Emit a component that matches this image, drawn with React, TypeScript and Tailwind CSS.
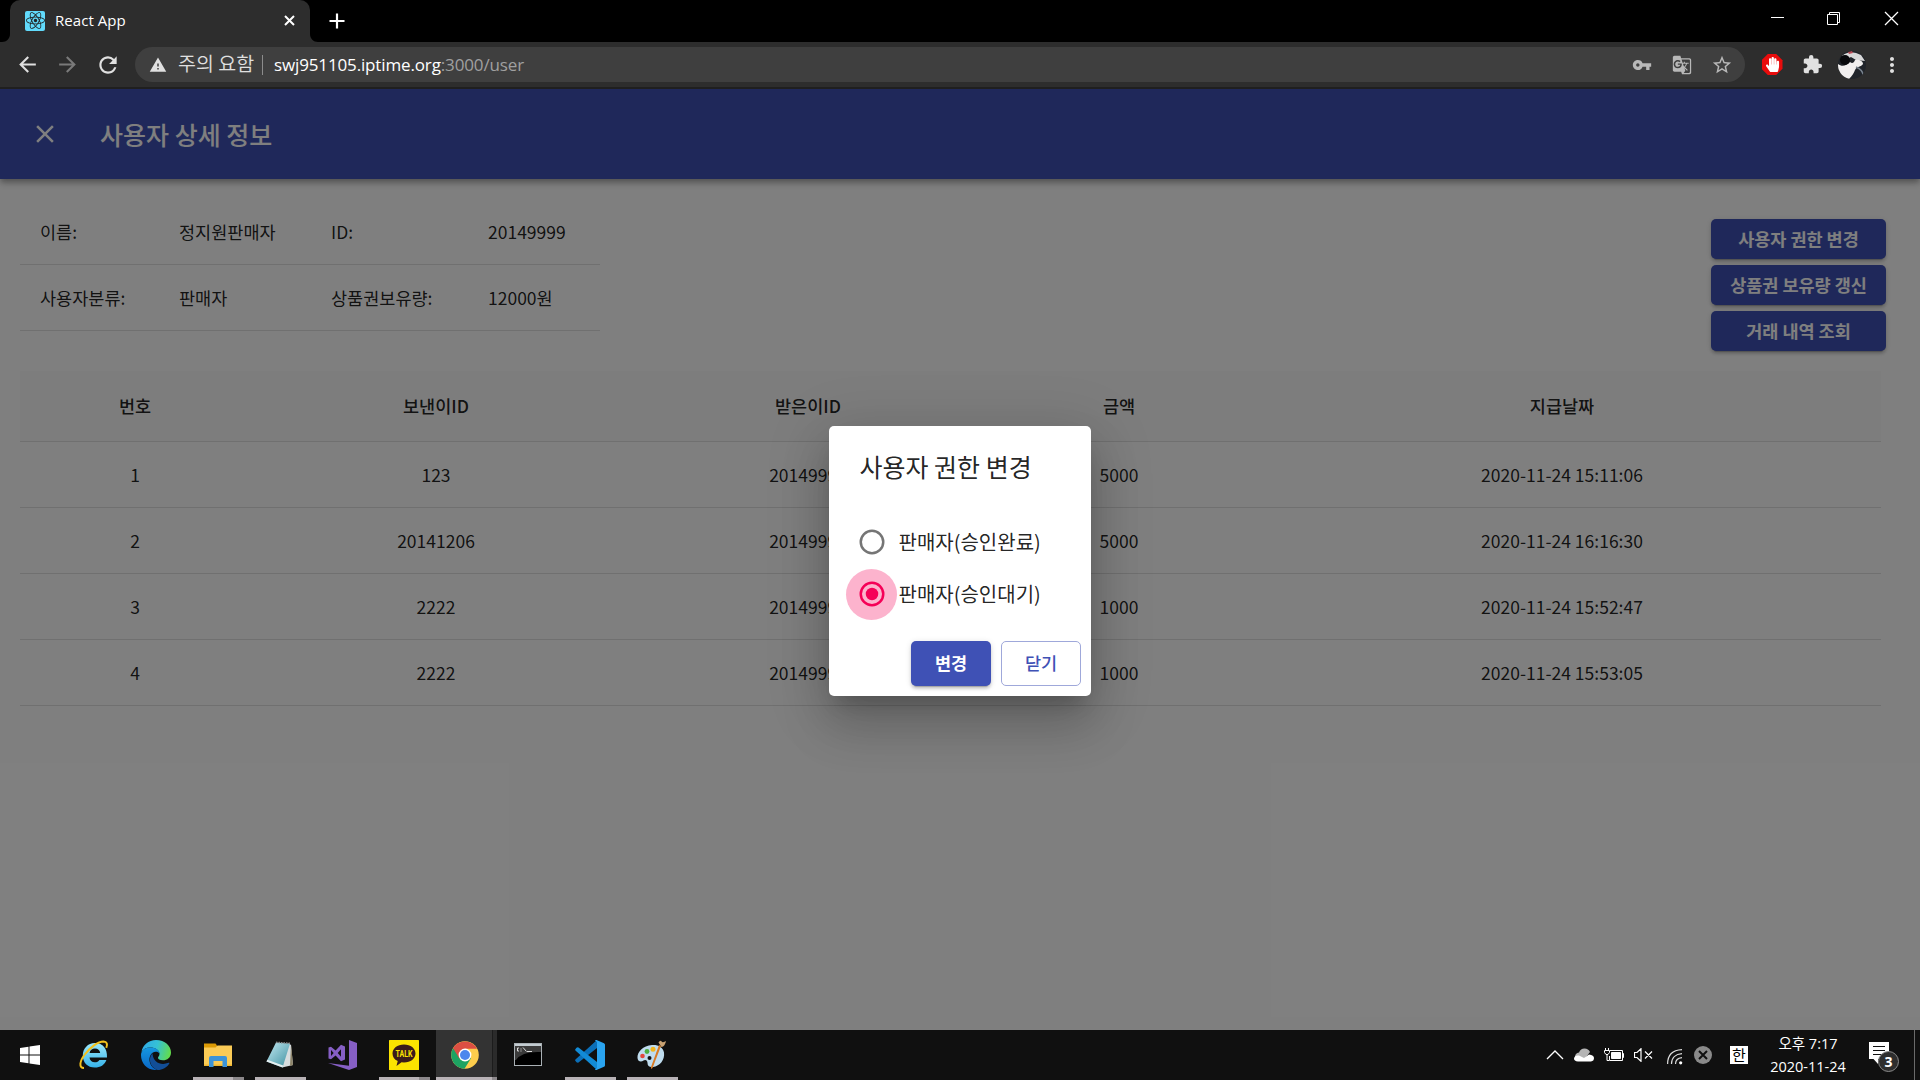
import React from 'react';
import {
  MdArrowBack, MdArrowForward, MdRefresh, MdWarning, MdVpnKey, MdGTranslate,
  MdStarBorder, MdExtension, MdMoreVert, MdClose,
} from 'react-icons/md';
import { FaReact, FaHandPaper } from 'react-icons/fa';

const rows = [
  ['1', '123', '20149999', '5000', '2020-11-24 15:11:06'],
  ['2', '20141206', '20149999', '5000', '2020-11-24 16:16:30'],
  ['3', '2222', '20149999', '1000', '2020-11-24 15:52:47'],
  ['4', '2222', '20149999', '1000', '2020-11-24 15:53:05'],
];

const raised =
  'shadow-[0_4px_1px_-3px_rgba(0,0,0,0.2),0_3px_3px_0_rgba(0,0,0,0.14),0_1px_6px_0_rgba(0,0,0,0.12)]';

function Cell({ children, w = 'w-10' }: { children?: React.ReactNode; w?: string }) {
  return <div className={`flex h-full shrink-0 items-center justify-center ${w}`}>{children}</div>;
}

function TabStrip() {
  return (
    <div className="flex h-[42px] bg-black">
      <svg className="ml-0.5 h-[42px] w-2 shrink-0" viewBox="0 0 8 42"><path d="M8 34v8H0c4.500 0 8-3.500 8-8z" fill="#2d2d2d" /></svg>
      <div className="flex w-[300px] items-center rounded-t-[10px] bg-[#2d2d2d] pb-[1px] pl-[15px]">
        <div className="flex size-5 items-center justify-center rounded-[2px] bg-[#61dafb] text-[#222]"><FaReact size={19} /></div>
        <span className="mb-0.5 ml-[10px] font-['Open_Sans'] text-[15px] leading-5 tracking-[0.05px] text-white">React App</span>
        <svg className="ml-auto mr-[15px] size-[11px]" viewBox="0 0 11 11"><path d="M1 1l9 9M10 1l-9 9" stroke="#fff" strokeWidth="2" /></svg>
      </div>
      <svg className="h-[42px] w-2 shrink-0" viewBox="0 0 8 42"><path d="M0 34v8h8c-4.500 0-8-3.500-8-8z" fill="#2d2d2d" /></svg>
      <svg className="ml-[11px] mt-[13px] size-4" viewBox="0 0 16 16"><path d="M8 .5v15M.5 8h15" stroke="#fff" strokeWidth="2.200" /></svg>
      <div className="ml-auto flex">
        <svg className="mt-[11px] h-[15px] w-[15px]" viewBox="0 0 15 15"><path d="M1 6.500h13" stroke="#fff" /></svg>
        <svg className="ml-[41px] mt-[11px] h-[15px] w-[15px]" viewBox="0 0 15 15" fill="none" stroke="#fff"><path d="M1.500 3.500h10v10h-10zM3.500 3V1.500h10v10H12" /></svg>
        <svg className="ml-[43px] mr-[21px] mt-[11px] h-[15px] w-[15px]" viewBox="0 0 15 15"><path d="M1 1l13 13M14 1L1 14" stroke="#fff" strokeWidth="1.300" /></svg>
      </div>
    </div>
  );
}

function Toolbar() {
  return (
    <div className="flex h-[47px] items-center border-b-2 border-[#1f1f1f] bg-[#2d2d2d] pl-[7px] text-[#e0e0e0]">
      <Cell><MdArrowBack size={25} /></Cell>
      <Cell><MdArrowForward size={25} className="text-[#7a7a7a]" /></Cell>
      <Cell><MdRefresh size={26} className="ml-px" /></Cell>
      <div className="ml-2 mr-[7px] flex h-[35px] w-[1610px] items-center rounded-full bg-[#3f3f3f] pl-[14px] pr-[3px]">
        <MdWarning size={18} />
        <span className="mb-[3px] ml-[11px] w-[79px] whitespace-nowrap font-['Noto_Sans_CJK_KR'] text-[19.500px] font-[350] leading-7">주의 요함</span>
        <span className="ml-[5px] h-5 w-px bg-[#8c8c8c]" />
        <span className="ml-[11px] font-['Open_Sans'] text-[17px] leading-6 tracking-[-0.14px] text-white">swj951105.iptime.org<span className="text-[#a0a0a0]">:3000/user</span></span>
        <div className="ml-auto flex items-center text-[#b8b8b8]">
          <Cell><MdVpnKey size={20} /></Cell>
          <Cell><MdGTranslate size={20} /></Cell>
          <Cell><MdStarBorder size={22} /></Cell>
        </div>
      </div>
      <Cell>
        <span className="grid size-[21px] place-items-center bg-[#e80c0c] text-white [clip-path:polygon(30%_0,70%_0,100%_30%,100%_70%,70%_100%,30%_100%,0_70%,0_30%)]"><FaHandPaper size={15} /></span>
      </Cell>
      <Cell><MdExtension size={21} /></Cell>
      <Cell>
        <svg className="size-7 rounded-full" viewBox="0 0 28 28">
          <rect width="28" height="28" fill="#20242a" />
          <path d="M4 5Q12-2 23 4L27 10 18 9 13 6 5 10z" fill="#d8d8d8" />
          <path d="M10 1l4-1 1 2-4 1z" fill="#b84a55" />
          <path d="M0 13c4 3 8 2 12-2 2 2 4 1 5-2 4-1 8 1 8 4-2 3-6 2-8 6-1 3-3 6-6 9H6L0 20z" fill="#f1efef" />
          <circle cx="7" cy="9" r="5" fill="#08090c" />
          <path d="M18 16q7 3 7 8" stroke="#77818c" strokeWidth="1.500" fill="none" />
        </svg>
      </Cell>
      <Cell><MdMoreVert size={24} /></Cell>
    </div>
  );
}

function InfoRow({ cells }: { cells: string[] }) {
  return (
    <div className="grid h-[66px] grid-cols-[139px_152px_157px_132px] items-center border-b border-[#e0e0e0] pt-0.5 text-[17.500px]">
      {cells.map((c) => <span key={c} className="whitespace-nowrap pl-5">{c}</span>)}
    </div>
  );
}

function ActionButton({ label }: { label: string }) {
  return (
    <button className={`h-10 w-[175px] whitespace-nowrap rounded-[5px] bg-[#3f51b5] text-[17.500px] font-bold text-white ${raised}`}>{label}</button>
  );
}

const gridCols = 'grid grid-cols-[230px_372px_372px_250px_636px] items-center border-b border-[#e0e0e0] text-center text-[17.500px]';

function Page() {
  return (
    <div className="relative h-[941px] overflow-hidden bg-white font-['Noto_Sans_CJK_KR',sans-serif] text-[rgba(0,0,0,0.87)]">
      <header className="relative flex h-[90px] items-center bg-[#3f51b5] pl-[30px] text-white shadow-[0_3px_5px_-1px_rgba(0,0,0,0.2),0_5px_6px_0_rgba(0,0,0,0.14),0_1px_12px_0_rgba(0,0,0,0.12)]">
        <MdClose size={30} />
        <h1 className="ml-[40px] text-[25px] font-medium leading-10">사용자 상세 정보</h1>
      </header>
      <div className="flex justify-between pl-5 pr-[34px] pt-5">
        <div className="w-[580px]">
          <InfoRow cells={['이름:', '정지원판매자', 'ID:', '20149999']} />
          <InfoRow cells={['사용자분류:', '판매자', '상품권보유량:', '12000원']} />
        </div>
        <div className="flex flex-col gap-1.5 pt-5">
          <ActionButton label="사용자 권한 변경" />
          <ActionButton label="상품권 보유량 갱신" />
          <ActionButton label="거래 내역 조회" />
        </div>
      </div>
      <div className="ml-5 mt-5 w-[1861px]">
        <div className={`h-[71px] bg-[#fafafa] font-medium ${gridCols}`}>
          {['번호', '보낸이ID', '받은이ID', '금액', '지급날짜'].map((h) => <span key={h}>{h}</span>)}
        </div>
        {rows.map((r) => (
          <div key={r[0]} className={`h-[66px] pt-0.5 ${gridCols}`}>
            {r.map((c, i) => <span key={i}>{c}</span>)}
          </div>
        ))}
      </div>
      <div className="absolute inset-0 flex items-center justify-center bg-black/50">
        <Dialog />
      </div>
    </div>
  );
}

function Radio({ checked, label }: { checked?: boolean; label: string }) {
  return (
    <label className="flex h-[52px] items-center text-[20px] leading-[30px]">
      <span className={`grid size-[51px] shrink-0 place-items-center rounded-full ${checked ? 'bg-[#fcb3cd] text-[#f50057]' : 'text-[#757575]'}`}>
        <svg className="size-[30px]" viewBox="0 0 24 24">
          <circle cx="12" cy="12" r="9" fill="none" stroke="currentColor" strokeWidth="2" />
          {checked && <circle cx="12" cy="12" r="5" fill="currentColor" />}
        </svg>
      </span>
      <span className="ml-[1.500px] whitespace-nowrap">{label}</span>
    </label>
  );
}

function Dialog() {
  return (
    <div className="mt-[3px] flex h-[270px] w-[262px] flex-col rounded-[5px] bg-white shadow-[0_14px_19px_-9px_rgba(0,0,0,0.2),0_30px_48px_4px_rgba(0,0,0,0.14),0_11px_58px_10px_rgba(0,0,0,0.12)]">
      <h2 className="pl-[30.500px] pt-[20px] text-[25px] font-normal leading-10">사용자 권한 변경</h2>
      <div className="mt-[30px] flex flex-col pl-[17px]">
        <Radio label="판매자(승인완료)" />
        <Radio label="판매자(승인대기)" checked />
      </div>
      <div className="mb-[10px] mr-[10px] mt-auto flex justify-end gap-[10px]">
        <button className={`h-[45px] w-20 rounded-[5px] bg-[#3f51b5] text-[17.500px] font-bold text-white ${raised}`}>변경</button>
        <button className="h-[45px] w-20 rounded-[5px] border border-[#9fa8da] text-[17.500px] font-medium text-[#3f51b5]">닫기</button>
      </div>
    </div>
  );
}

function TaskItem({ children, open, split, active }: { children: React.ReactNode; open?: boolean; split?: boolean; active?: boolean }) {
  return (
    <div className="flex w-[62px] shrink-0 justify-center">
      <div className={`flex h-[50px] flex-col ${active ? 'w-[61px] bg-[linear-gradient(90deg,#333_56px,#1c1c1c_56px,#1c1c1c_57px,#2b2b2b_57px)]' : 'w-[51px]'}`}>
        <div className="flex h-[47px] w-full items-center justify-center pt-[3px]">{children}</div>
        {open && (
          <div className="flex h-[3px] w-full bg-[#b8b2b6]">
            {split && <span className={`ml-auto bg-[#8c888b] ${active ? 'w-[5px]' : 'w-[11px]'}`} />}
          </div>
        )}
      </div>
    </div>
  );
}

function Taskbar() {
  return (
    <div className="flex h-[50px] items-center bg-[#101010] text-white">
      <div className="flex w-[63px] justify-center pr-[3px]">
        <svg className="size-5" viewBox="0 0 20 20"><path d="M0 3l8.500-1.200v7.700H0zM9.500 1.600L20 0v9.500H9.500zM0 10.500h8.500v7.700L0 17zM9.500 10.500H20V20L9.500 18.400z" fill="#fff" /></svg>
      </div>
      <TaskItem>
        <svg className="size-[30px]" viewBox="0 0 30 30">
          <defs><linearGradient id="ie" x1="0" y1="0" x2="0" y2="1"><stop offset="0" stopColor="#9de9fc" /><stop offset="1" stopColor="#35b2e8" /></linearGradient></defs>
          <path d="M28 17.500H10.500c.3 3 2.400 4.800 5.300 4.800 2.200 0 3.700-.8 4.600-2.300h7c-1.800 5-6 7.600-11.600 7.600C8.500 27.600 3.800 22.500 3.800 15.500S8.800 3 16 3c8 0 12.400 5.500 12 14.500zM21.200 13c-.4-2.800-2.300-4.400-5.200-4.400s-5 1.700-5.400 4.400z" fill="url(#ie)" />
          <path d="M5 28c-5.500 0-4.300-7 .8-13.500C11 7.500 19 1.500 24.500 1.500c3.500.1 4.300 3 2.800 6.300" fill="none" stroke="#f3c11d" strokeWidth="2" />
        </svg>
      </TaskItem>
      <TaskItem>
        <svg className="size-[30px]" viewBox="0 0 30 30">
          <defs>
            <linearGradient id="eg" x1="0" y1=".3" x2="1" y2=".5"><stop offset="0" stopColor="#2fa9e8" /><stop offset=".5" stopColor="#35c1d5" /><stop offset="1" stopColor="#62dc4c" /></linearGradient>
            <linearGradient id="eb" x1="0" y1="0" x2="0" y2="1"><stop offset="0" stopColor="#1597e0" /><stop offset="1" stopColor="#0a66c5" /></linearGradient>
          </defs>
          <path d="M.5 12C1.500 5 7.500 0 15 0c9 0 15 6 15 12.500 0 5-3.800 7.800-8 7.800-3.500 0-5-1.300-5-2.500 0-1 1.500-1.500 1.500-4C18.500 10 14 7.500 9.500 7.500 5 7.500 2 9.500.5 12z" fill="url(#eg)" />
          <path d="M0 15C0 10.500 4 7.500 9.500 7.500c5 0 9 2.700 9 6-1-1.500-2.500-2-4-1.800-4 .4-6.500 4.500-6 9 .5 4.300 3.500 8 8 9.200C7 31 0 24 0 15z" fill="url(#eb)" />
          <path d="M11.500 13.300C7.500 17 7.500 27 16.500 30c5 0 9.500-2.600 11.800-6.500.4-.8-.2-1-.8-.7-7 3-15.500.2-16-9.500z" fill="#124e97" />
        </svg>
      </TaskItem>
      <TaskItem open split>
        <svg className="size-[28px]" viewBox="0 0 28 28">
          <path d="M0 2.500h11.500l1.500 2v5H0z" fill="#dc9a05" />
          <path d="M0 6.500h11.500L13.500 4.500H28v20.500H0z" fill="#fbcb56" /><path d="M0 23.500h28V25H0z" fill="#f0b62e" />
          <path d="M5 26v-9q0-2 2-2h14q2 0 2 2v9h-4.500v-6h-9v6z" fill="#3c93d8" />
        </svg>
      </TaskItem>
      <TaskItem open>
        <svg className="size-[30px]" viewBox="0 0 30 30">
          <defs><linearGradient id="np" x1="0" y1="0" x2="1" y2="1"><stop offset="0" stopColor="#c3eaf2" /><stop offset="1" stopColor="#3d8fa0" /></linearGradient></defs>
          <path d="M23 3l3 2 2 20-11 2.500z" fill="#d7dddf" /><path d="M26 4.500L28 25l-3 1z" fill="#8c8368" />
          <path d="M11 2.500L25 3.500 17.500 27.500 1.500 21.500z" fill="url(#np)" /><path d="M1.500 21.500l16 6 .7-2L2.300 19.800z" fill="#e6eff1" />
          <path d="M11 2.300l14 1" stroke="#888" strokeWidth="1.500" strokeDasharray="1.500 1" />
        </svg>
      </TaskItem>
      <TaskItem>
        <svg className="size-[30px]" viewBox="0 0 30 30" fill="#865fc5">
          <path d="M22 0l8 3v24l-8 3L1 23l21 2.800z" />
          <path fillRule="evenodd" d="M1.500 7.500L4 6.800l4.600 3.600L14 4.800l4 1.700v13L14 21.300l-5.400-5.700L4 19.200l-2.500-.8zM4 10v6l2.700-3zM14 9.300L10.700 13 14 16.700z" />
        </svg>
      </TaskItem>
      <TaskItem open split>
        <svg className="size-[30px]" viewBox="0 0 30 30">
          <rect width="30" height="30" rx="0.500" fill="#fbe300" />
          <path d="M15 4.500c6.700 0 11.500 3.900 11.500 9s-4.800 9-11.500 9l-2.500-.2L7.500 26l1.200-5C5.300 19.500 3.500 16.700 3.500 13.500c0-5.100 4.800-9 11.500-9z" fill="#391b1b" />
          <text x="15" y="16.600" textAnchor="middle" textLength="17" lengthAdjust="spacingAndGlyphs" fontFamily="Roboto" fontWeight="700" fontSize="8.500" fill="#fbe300">TALK</text>
        </svg>
      </TaskItem>
      <TaskItem open split active>
        <svg className="mr-[2px] size-[28px]" viewBox="0 0 28 28">
          <circle cx="14" cy="14" r="13.800" fill="#fdcd4c" />
          <path d="M14 14L2 7.200A13.800 13.800 0 0 0 13.500 27.800L20 17.300z" fill="#1da362" />
          <path d="M14 14L8.300 17.500 2 7.100A13.800 13.800 0 0 1 26 7.700H14z" fill="#dc4f43" />
          <circle cx="14" cy="14" r="6.400" fill="#fff" /><circle cx="14" cy="14" r="5" fill="#4b87ed" />
        </svg>
      </TaskItem>
      <TaskItem>
        <svg className="mb-px mr-px h-[23px] w-[28px]" viewBox="0 0 28 23">
          <rect x=".5" y=".5" width="27" height="22" fill="#000" stroke="#a9b0b4" /><rect x="1" y="1" width="26" height="2" fill="#c3ccd1" />
          <path d="M1 3h26v6Q8 8 2 17H1z" fill="#3b3b3b" />
          <path d="M5 5H3.500v3H5M7 5.500v1M7 7.500v1M9 4.500l3.500 4M13 8.500h5" stroke="#ddd" fill="none" />
        </svg>
      </TaskItem>
      <TaskItem open>
        <svg className="size-[30px]" viewBox="0 0 30 30">
          <path d="M22 0L22 8 3.500 22.500Q2.500 23 1.500 22.200L.5 21q-.8-1 .2-1.800z" fill="#0b6fb8" />
          <path d="M22 30L22 22 3.500 7.500Q2.500 7 1.500 7.800L.5 9q-.8 1 .2 1.800z" fill="#128bd6" />
          <path d="M21.500 0L29 3.300q1 .5 1 1.500v20.400q0 1-1 1.500L21.500 30q-1 .2-1.500-.6l2-1.400V2L20 .6Q20.500-.2 21.500 0z" fill="#2aa4f0" />
        </svg>
      </TaskItem>
      <TaskItem open>
        <svg className="size-[30px]" viewBox="0 0 30 30">
          <path d="M15 5C6 5.500 0 12 .5 18c.3 4 4 4 6 2.500s4 0 4 2.500c0 3 2 4.500 5.500 4C23 26 28 20 27 12.500 26 7 21 4.500 15 5z" fill="#bfdcee" />
          <circle cx="12.500" cy="18" r="2" fill="#111" />
          <circle cx="5.500" cy="16" r="2.300" fill="#e2483d" /><circle cx="10" cy="11.500" r="2.400" fill="#4caf3f" /><circle cx="16" cy="9.300" r="2.500" fill="#f2b61e" />
          <path d="M24 6l-8.500 22-1.500 1 0-2L22 5z" fill="#d97a24" /><path d="M21.500 2.500q2-3 3.500-.5 2 .5 4-1-1 5.500-4.500 6z" fill="#c9a273" />
        </svg>
      </TaskItem>

      <div className="ml-auto flex h-full items-center">
        <svg className="h-[10px] w-[18px]" viewBox="0 0 18 10"><path d="M1 9l8-8 8 8" fill="none" stroke="#fff" strokeWidth="1.300" /></svg>
        <svg className="ml-[10px] h-[14px] w-5" viewBox="0 0 20 14"><path d="M1 9q0-4 4-4.500Q6.500.5 10.500.5q4 0 5.500 3.500L9 13H4q-3-1-3-4z" fill="#b5b5b5" /><path d="M4 13.500q-4-.5-4-3Q.5 7 5 7.500l5 2.500 5-3.500Q20 7 20 10q0 3-3 3.500z" fill="#fff" /></svg>
        <svg className="ml-[10px] h-[14px] w-5" viewBox="0 0 20 14" fill="none" stroke="#fff"><path d="M6 2.500h12.500v10H5.500V8M18.500 5.500h1v4h-1" /><path d="M7.500 4.500h9v6h-9z" fill="#fff" /><path d="M1.500 0v2M4.500 0v2M.5 2.500h5v2l-1.500 2H2l-1.500-2zM3 7v5.500h2" /></svg>
        <svg className="ml-[10px] h-[14px] w-[19px]" viewBox="0 0 19 14" fill="none" stroke="#fff"><path d="M.5 4.500h2.500L7 .7v12.600L3 9.500H.5zM11 3.500l7 7M18 3.500l-7 7" strokeWidth="1.200" /></svg>
        <svg className="ml-[14px] mt-1 size-4" viewBox="0 0 16 16" fill="none" stroke="#ddd" strokeWidth="1.200"><path d="M.6 15C.6 6 6 1 15 .6M4.500 15C4.500 9 8.500 5 15 4.600M8.500 15c0-3.800 2.500-6 6.500-6.300" /><circle cx="13.700" cy="13.800" r="1.600" fill="#fff" stroke="none" /></svg>
        <svg className="ml-[11px] size-[18px]" viewBox="0 0 18 18"><circle cx="9" cy="9" r="9" fill="#8a8a8a" /><path d="M5 5l8 8M13 5l-8 8" stroke="#111" strokeWidth="2" /></svg>
        <span className="ml-[18px] grid size-[18px] place-items-center bg-white font-['Noto_Sans_CJK_KR'] text-[15px] leading-[18px] text-black">한</span>
        <div className="ml-[15px] flex w-[90px] flex-col items-center whitespace-nowrap font-['Open_Sans','Noto_Sans_CJK_KR'] text-[14.500px] leading-[23.500px]">
          <span>오후 7:17</span>
          <span>2020-11-24</span>
        </div>
        <div className="relative ml-[16px] mt-1 h-[30px] w-[30px]">
          <svg className="size-full" viewBox="0 0 30 30"><path d="M0 0h20v17H9l0 5-4.500-5H0z" fill="#fff" /><path d="M4 4.500h12M4 8.500h12M4 12.500h9" stroke="#111" /></svg>
          <span className="absolute bottom-0 right-0 grid size-[21px] place-items-center rounded-full border border-[#8a8a8a] bg-[#2e2e2e] font-['Open_Sans'] text-[14px] font-bold leading-none">3</span>
        </div>
        <span className="ml-[15px] mr-[5px] h-full w-px bg-[#6a6a6a]" />
      </div>
    </div>
  );
}

export default function App() {
  return (
    <div className="flex h-[1080px] w-[1920px] flex-col overflow-hidden">
      <TabStrip />
      <Toolbar />
      <Page />
      <Taskbar />
    </div>
  );
}
